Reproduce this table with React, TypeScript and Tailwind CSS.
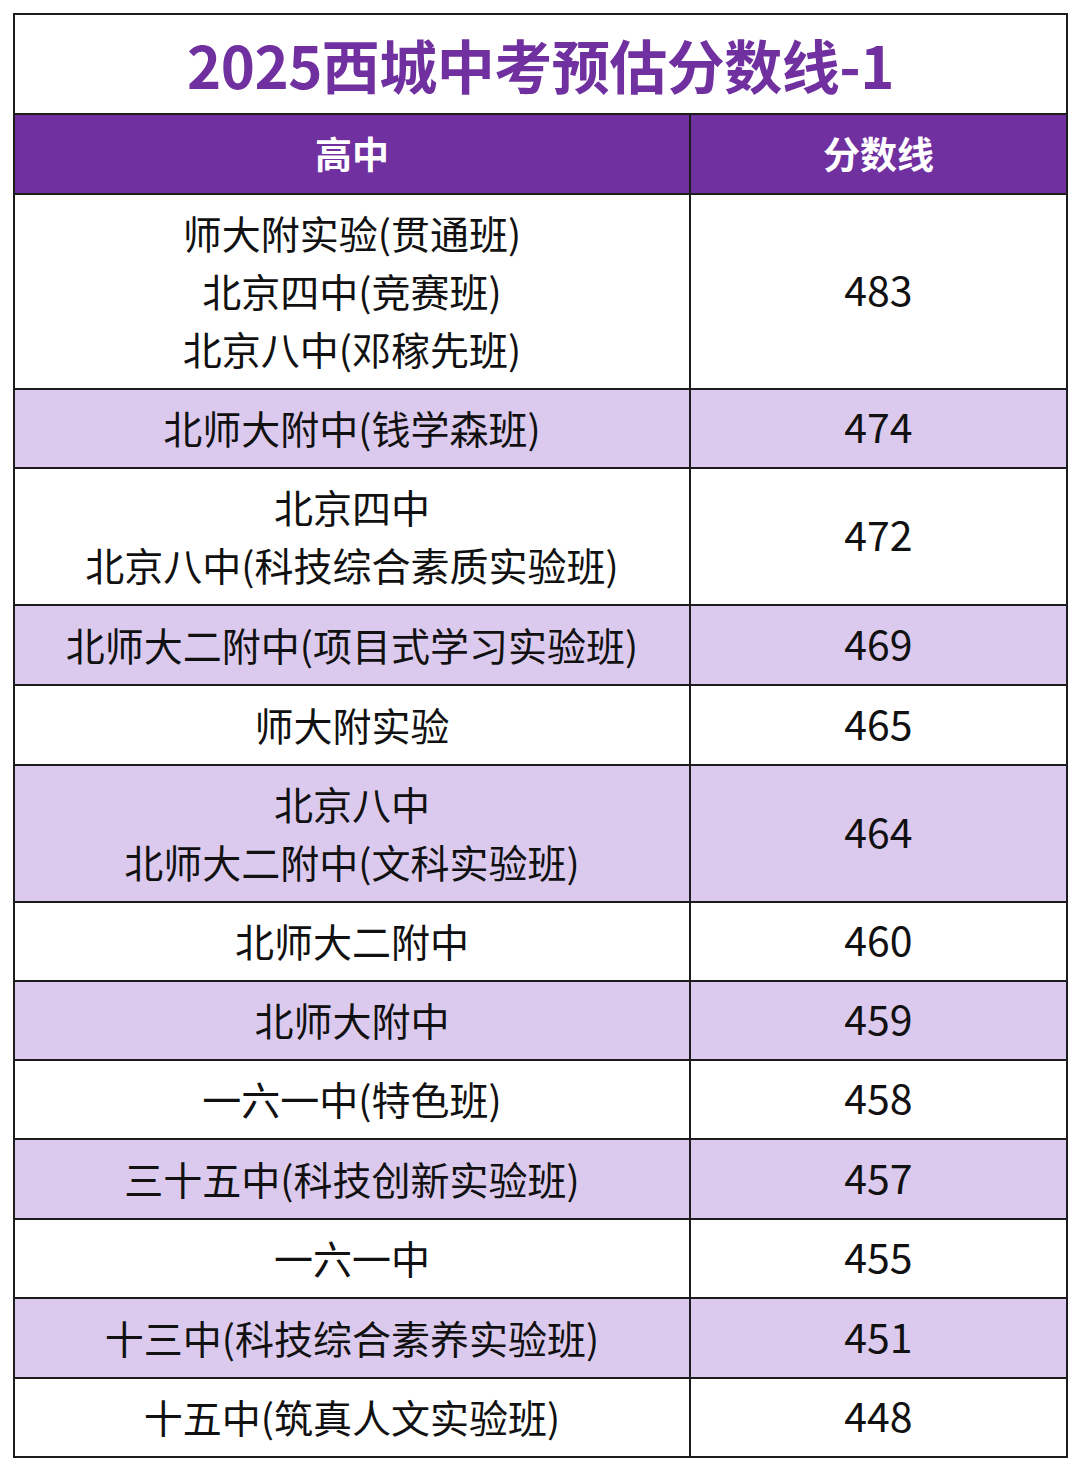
import React from "react";

type Row = { names: string[]; score: string; h: string; alt: boolean };

const rows: Row[] = [
  { names: ["师大附实验(贯通班)", "北京四中(竞赛班)", "北京八中(邓稼先班)"], score: "483", h: "h-[195px]", alt: false },
  { names: ["北师大附中(钱学森班)"], score: "474", h: "h-[79px]", alt: true },
  { names: ["北京四中", "北京八中(科技综合素质实验班)"], score: "472", h: "h-[137px]", alt: false },
  { names: ["北师大二附中(项目式学习实验班)"], score: "469", h: "h-[80px]", alt: true },
  { names: ["师大附实验"], score: "465", h: "h-[80px]", alt: false },
  { names: ["北京八中", "北师大二附中(文科实验班)"], score: "464", h: "h-[137px]", alt: true },
  { names: ["北师大二附中"], score: "460", h: "h-[79px]", alt: false },
  { names: ["北师大附中"], score: "459", h: "h-[79px]", alt: true },
  { names: ["一六一中(特色班)"], score: "458", h: "h-[79px]", alt: false },
  { names: ["三十五中(科技创新实验班)"], score: "457", h: "h-[80px]", alt: true },
  { names: ["一六一中"], score: "455", h: "h-[79px]", alt: false },
  { names: ["十三中(科技综合素养实验班)"], score: "451", h: "h-[80px]", alt: true },
  { names: ["十五中(筑真人文实验班)"], score: "448", h: "h-[79px]", alt: false },
];

export default function App() {
  return (
    <div
      className="w-[1080px] h-[1471px] bg-white pt-[13px] pl-[13px]"
      style={{ fontFamily: '"Noto Sans CJK SC", "Noto Sans", sans-serif' }}
    >
      <div className="w-[1055px] border-2 border-[#1c1c1c] flex flex-col">
        <div className="h-[98px] flex items-center justify-center">
          <span className="text-[58px] font-bold text-[#7030a0] leading-none tracking-[-0.5px]">
            2025西城中考预估分数线-1
          </span>
        </div>
        <div className="h-[80px] border-t-2 border-[#1c1c1c] bg-[#7030a0] grid grid-cols-[676px_1fr] text-white font-bold text-[37px]">
          <div className="flex items-center justify-center border-r-2 border-[#1c1c1c]">高中</div>
          <div className="flex items-center justify-center">分数线</div>
        </div>
        {rows.map((r, i) => (
          <div
            key={i}
            className={`${r.h} border-t-2 border-[#1c1c1c] grid grid-cols-[676px_1fr] text-[#111] ${
              r.alt ? "bg-[#dccaee]" : "bg-white"
            }`}
          >
            <div className="flex flex-col items-center justify-center border-r-2 border-[#1c1c1c] text-[39px] leading-[58px] pb-[3px]">
              {r.names.map((n, j) => (
                <div key={j}>{n}</div>
              ))}
            </div>
            <div className="flex items-center justify-center text-[41px] leading-none pb-[6px]">{r.score}</div>
          </div>
        ))}
      </div>
    </div>
  );
}
